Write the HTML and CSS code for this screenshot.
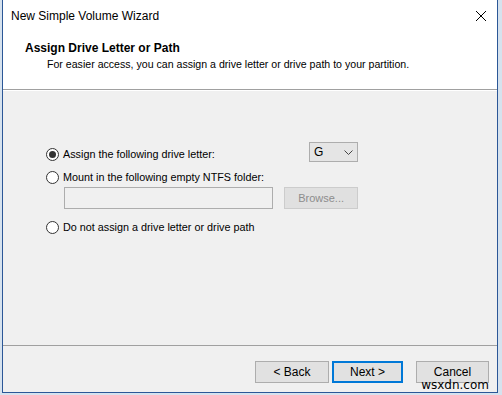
FILE: index.html
```html
<!DOCTYPE html>
<html>
<head>
<meta charset="utf-8">
<link rel="stylesheet" href="styles.css">
</head>
<body>
<div class="window">
  <div class="titlebar">
    <span class="title">New Simple Volume Wizard</span>
    <svg class="close" width="12" height="12" viewBox="0 0 12 12"><path d="M1 1 L11 11 M11 1 L1 11" stroke="#000" stroke-width="1" fill="none"/></svg>
  </div>
  <div class="header">
    <div class="h-title">Assign Drive Letter or Path</div>
    <div class="h-sub">For easier access, you can assign a drive letter or drive path to your partition.</div>
  </div>
  <div class="body">
    <div class="options">
      <div class="row">
        <span class="radio checked"></span>
        <span class="label">Assign the following drive letter:</span>
        <div class="select"><span>G</span><svg width="9" height="6" viewBox="0 0 9 6"><path d="M0.5 0.5 L4.5 4.5 L8.5 0.5" stroke="#444" stroke-width="1" fill="none"/></svg></div>
      </div>
      <div class="row">
        <span class="radio"></span>
        <span class="label">Mount in the following empty NTFS folder:</span>
      </div>
      <div class="folder-row">
        <div class="textbox"></div>
        <div class="browse">Browse...</div>
      </div>
      <div class="row row3">
        <span class="radio"></span>
        <span class="label">Do not assign a drive letter or drive path</span>
      </div>
    </div>
  </div>
  <div class="footer">
    <div class="btn">&lt; Back</div>
    <div class="btn default">Next &gt;</div>
    <div class="btn cancel">Cancel</div>
  </div>
  <div class="watermark">wsxdn.com</div>
</div>
</body>
</html>
```
FILE: styles.css
```css
html, body {
  margin: 0;
  padding: 0;
}
body {
  width: 502px;
  height: 395px;
  background: #d6e2ee;
  font-family: "Liberation Sans", Arial, sans-serif;
  color: #000;
  overflow: hidden;
}
.window {
  position: relative;
  margin-left: 2px;
  width: 494px;
  height: 392px;
  border: 1px solid #2b5797;
  border-top: none;
  background: #f0f0f0;
  display: flex;
  flex-direction: column;
}
.titlebar {
  height: 31px;
  background: #fff;
  display: flex;
  align-items: center;
  padding-left: 8px;
  padding-right: 10px;
}
.title {
  font-size: 12px;
  flex: 1;
  padding-top: 1px;
}
.close {
  display: block;
}
.header {
  height: 59px;
  background: #fff;
  border-bottom: 1px solid #a0a0a0;
  box-sizing: border-box;
  padding-left: 22px;
  padding-top: 10px;
}
.h-title {
  font-weight: bold;
  font-size: 12px;
  line-height: 15px;
}
.h-sub {
  font-size: 10.6px;
  line-height: 14px;
  padding-left: 22px;
  margin-top: 1px;
}
.body {
  flex: 1;
  border-top: 1px solid #fff;
  padding-top: 53px;
  padding-left: 43px;
  box-sizing: border-box;
}
.options {
  width: 312px;
  display: flex;
  flex-direction: column;
}
.row {
  height: 20px;
  display: flex;
  align-items: center;
}
.row + .row {
  margin-top: 3px;
}
.row3 {
  margin-top: 9px;
}
.radio {
  width: 11px;
  height: 11px;
  border: 1px solid #333;
  border-radius: 50%;
  background: #fff;
  position: relative;
  flex: none;
}
.radio.checked::after {
  content: "";
  position: absolute;
  left: 2px;
  top: 2px;
  width: 7px;
  height: 7px;
  border-radius: 50%;
  background: #333;
}
.label {
  font-size: 10.8px;
  margin-left: 4px;
  flex: 1;
}
.select {
  height: 18px;
  border: 1px solid #adadad;
  background: #e5e5e5;
  display: flex;
  align-items: center;
  justify-content: space-between;
  padding: 0 4px 0 4px;
  margin-top: -4px;
  width: 39px;
  font-size: 12px;
}
.select svg {
  display: block;
  margin-top: 1px;
}
.folder-row {
  display: flex;
  padding-left: 18px;
  gap: 11px;
  height: 21px;
}
.textbox {
  width: 208px;
  height: 20px;
  border: 1px solid #adadad;
  background: #f0f0f0;
}
.browse {
  width: 72px;
  height: 20px;
  border: 1px solid #cccccc;
  background: #e0e0e0;
  color: #8d8d8d;
  font-size: 11px;
  display: flex;
  align-items: center;
  justify-content: center;
}
.footer {
  height: 47px;
  border-top: 1px solid #a0a0a0;
  box-sizing: border-box;
  display: flex;
  justify-content: flex-end;
  padding-top: 15px;
  padding-right: 8px;
}
.btn {
  width: 72px;
  height: 20px;
  border: 1px solid #adadad;
  background: #e1e1e1;
  font-size: 12px;
  display: flex;
  align-items: center;
  justify-content: center;
}
.btn.default {
  margin-left: 3px;
  width: 67px;
  height: 18px;
  border: 2px solid #0078d7;
}
.btn.cancel {
  margin-left: 13px;
  width: 71px;
}
.watermark {
  position: absolute;
  right: 8px;
  bottom: 0px;
  font-family: "DejaVu Sans", sans-serif;
  font-size: 12px;
  line-height: 13px;
  color: #000;
}
```
